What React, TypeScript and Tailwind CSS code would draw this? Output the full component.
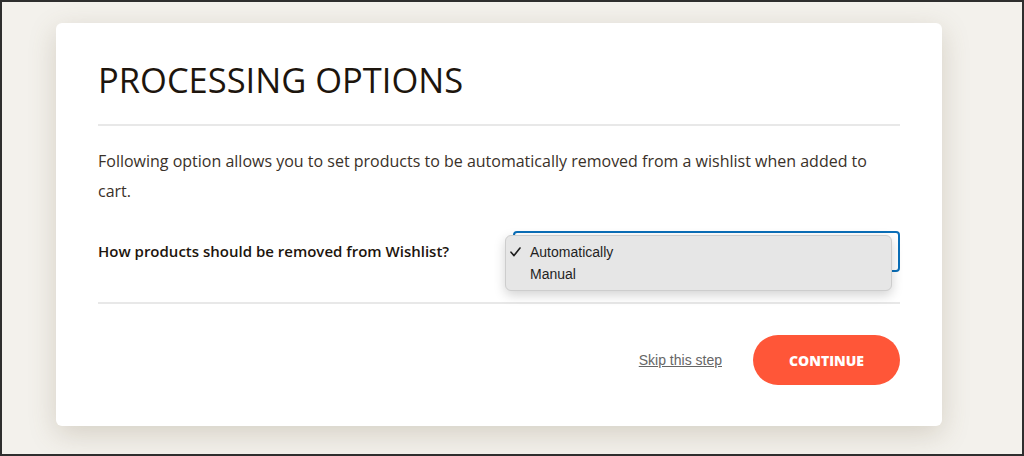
import React from 'react';

const openSans = { fontFamily: '"Open Sans", "Noto Sans", sans-serif' };

export default function App() {
  return (
    <div className="w-[1024px] h-[456px] overflow-hidden border-2 border-[#2e2e2e] bg-[#f3f1ec]">
      <div
        className="ml-[54px] mt-[21px] w-[886px] h-[403px] rounded-md bg-white px-[42px] pt-[39px] shadow-[0_8px_28px_rgba(110,90,60,0.22)]"
        style={openSans}
      >
        <h1 className="text-[34.5px] leading-[35px] font-normal text-[#1d150d]">PROCESSING OPTIONS</h1>
        <div className="mt-[27px] h-[2px] bg-[#e8e8e8]" />

        <p className="mt-[20px] text-[16px] leading-[30px] text-[#3a3129]">
          Following option allows you to set products to be automatically removed from a wishlist when added to cart.
        </p>

        <div className="mt-[25px] flex items-center">
          <label className="w-[415px] text-[15px] font-semibold text-[#1d150d]">
            How products should be removed from Wishlist?
          </label>
          <div className="relative h-[41px] flex-1 rounded-[4px] border-2 border-[#0b6fb8] bg-white">
            <div
              className="absolute left-[-10px] top-[2px] w-[387px] rounded-[6px] border border-[#cdcdcd] bg-[#e6e6e6] py-[5px] shadow-[0_4px_12px_rgba(0,0,0,0.18)]"
              style={{ fontFamily: '"Liberation Sans", Arial, sans-serif' }}
            >
              <div className="flex h-[22px] items-center text-[14px] text-[#1f1f1f]">
                <span className="flex w-[24px] pl-[4px]">
                  <svg width="11" height="10" viewBox="0 0 11 10" fill="none">
                    <path d="M1 5.2 L4 8.6 L10 1" stroke="#1f1f1f" strokeWidth="1.6" strokeLinecap="round" strokeLinejoin="round" />
                  </svg>
                </span>
                <span>Automatically</span>
              </div>
              <div className="flex h-[22px] items-center text-[14px] text-[#1f1f1f]">
                <span className="w-[24px]" />
                <span>Manual</span>
              </div>
            </div>
          </div>
        </div>

        <div className="mt-[30px] h-[2px] bg-[#e8e8e8]" />

        <div className="mt-[31px] flex items-center justify-end gap-[31px]">
          <a
            className="text-[14px] text-[#666] underline"
            style={{ fontFamily: '"Liberation Sans", Arial, sans-serif' }}
          >
            Skip this step
          </a>
          <button className="h-[50px] w-[147px] rounded-full bg-[#ff5638] text-[14px] font-extrabold text-white">
            CONTINUE
          </button>
        </div>
      </div>
    </div>
  );
}
